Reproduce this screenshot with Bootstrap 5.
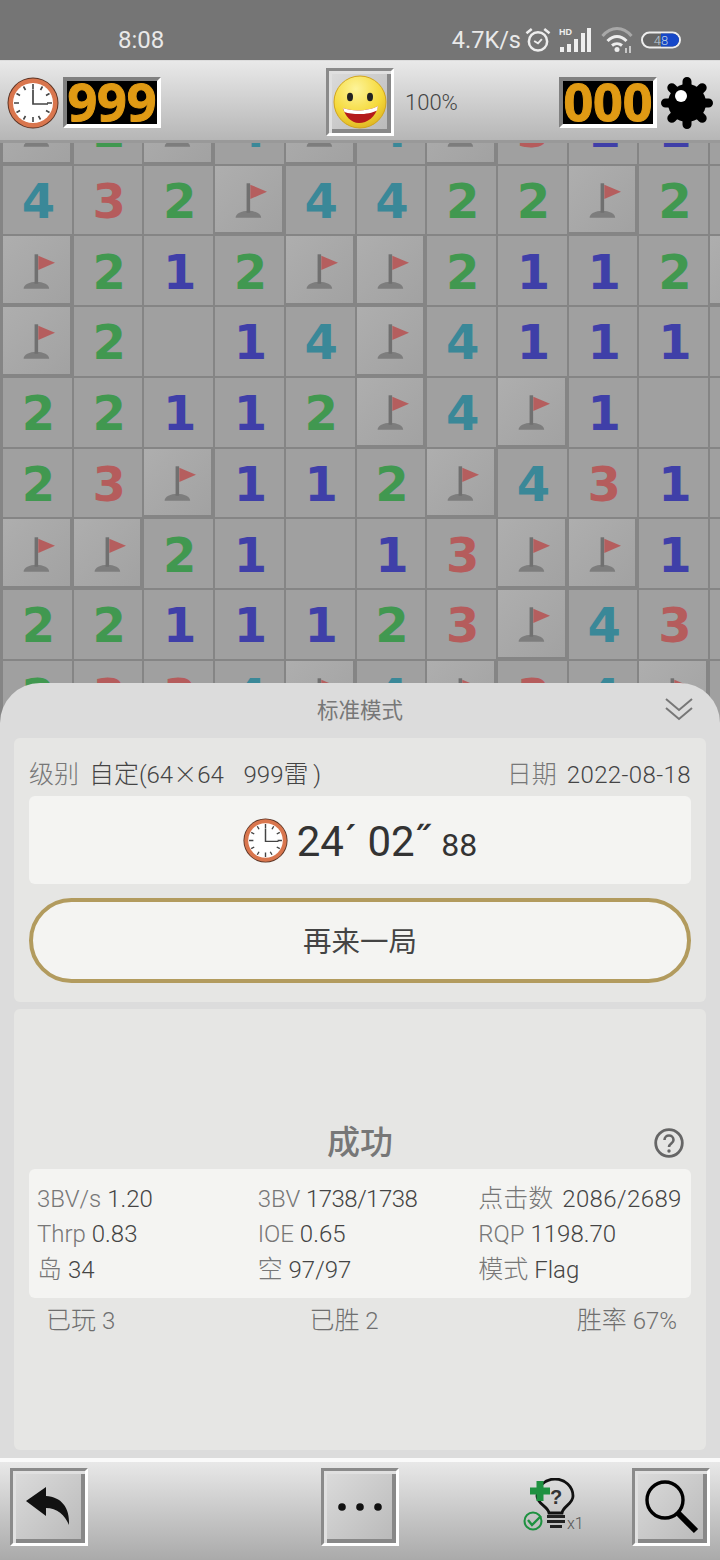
<!DOCTYPE html>
<html lang="zh"><head><meta charset="utf-8"><title>扫雷</title>
<link href="https://cdn.jsdelivr.net/npm/bootstrap@5.3.0/dist/css/bootstrap.min.css" rel="stylesheet">
<style>
html,body{margin:0;padding:0;width:720px;height:1560px;overflow:hidden;background:#dcdcdc}
body{font-family:Roboto,"Noto Sans CJK SC",sans-serif;font-weight:300;color:#444}
.shell{width:720px;height:1560px}
.statusbar{height:60px;background:#757575;color:#e9e9e9;padding:16px 39px 0 118px;line-height:48px}
.statusbar .clock-t{font-size:24px;font-weight:400}
.statusbar .speed{font-size:23.5px;margin-right:4px;font-weight:400}
.topbar{height:83px;background:linear-gradient(#e9e9e9,#b6b6b6);border-bottom:3px solid #999;border-top:1px solid #ddd;padding:4px 7px 0}
.lcd{width:98px;height:51px;background:#000;border-style:solid;border-width:4px;border-color:#808080 #fff #fff #808080;color:#e09a14;font:700 52px/39px "Noto Sans",sans-serif;text-align:center;-webkit-text-stroke:1px #e09a14}
.bevel{background:linear-gradient(135deg,#dcdcdc,#b8b8b8);border-style:solid;border-width:3px;border-color:#8a8a8a #fff #fff #8a8a8a;box-shadow:inset 3px 3px 0 #e0e0e0,inset -4px -4px 0 #888}
.smile-btn{width:68px;height:68px;margin-top:-1px}
.pct{font-size:22px;color:#444;margin-left:11px}
.mid{margin-left:165px}
.board{height:580px;overflow:hidden;background:#858585}
.tiles{display:grid;grid-template-columns:repeat(11,68.72px);grid-auto-rows:68.72px;gap:2px;padding-left:3px;margin-top:-48.1px;font:700 48px/1 "DejaVu Sans",sans-serif}
.tile{background:#a0a0a0;display:flex;align-items:center;justify-content:center;padding:2px 0 0 2px}
.tile-up{background:linear-gradient(135deg,#aeaeae,#a2a2a2);border-right:2px solid #858585;border-bottom:2px solid #858585;padding:0}
.d1{color:#3f3fa8}.d2{color:#419850}.d3{color:#b55c5c}.d4{color:#3a8898}
.sheet{position:relative;margin-top:-40px;height:773px;background:#dcdcdc;border-radius:40px 40px 0 0;padding:0 14px 6px}
.sheet-head{height:55px;color:#777;font-size:21.5px;font-weight:400;padding-top:2px}
.sheet-head svg{position:absolute;right:27px;top:14px}
.panel{background:#e6e6e4;border-radius:6px;padding:0 15px}
.panel-a{height:264px}
.panel-b{height:441px;margin-top:7px}
.info-row{height:58px;font-size:24px;line-height:32px;padding-top:21px;word-spacing:4px}
.info-row .date-val{letter-spacing:.4px}
.lbl{color:#777}
.val{color:#444}
.big-cjk{font-size:25px;line-height:1}
.times{font-family:"Noto Sans CJK SC",sans-serif;font-weight:300;line-height:1}
.box{background:#f4f4f2;border-radius:6px}
.time-box{height:88px;color:#333;font-weight:400;font-size:42px;line-height:60px;gap:9px}
.time-box .t-txt{margin-top:6px}
.time-box small{font-size:32px;margin-left:11px}
.again{height:85px;margin-top:14px;border:4px solid #b29b5e;border-radius:43px;font-size:28.5px;color:#444;font-weight:400;background:#f4f4f2;padding-top:5px}
.result-head{height:160px;padding:116px 7px 0}
.result-title{color:#777;font-size:33px;font-weight:500;line-height:36px}
.result-head svg{margin-top:3px}
.spacer-w{width:30px}
.stats{height:129px;padding:12.500px 0 0;font-size:24px;line-height:35.5px}
.stats .col-4{padding-left:8px;white-space:nowrap;height:35.5px}
.stats .tight{letter-spacing:-.55px}
.stats .wide{letter-spacing:.4px;margin-left:3px}
.tally{font-size:24px;padding:6px 14px 0 17px;line-height:34px}
.tally .lbl{color:#6f6f6f}
.bottombar{height:104px;background:#dcdcdc;padding-top:2px}
.bottom-in{height:102px;border-top:4px solid #fafafa;background:linear-gradient(#e8e8e8,#aaa);padding:6px 10px 0}
.tool{width:78px;height:78px}
.tool-more{margin-left:233px}
.hint{width:62px;height:58px;margin:10px 0 0 123px}
</style></head>
<body>
<svg width="0" height="0" style="position:absolute">
<defs>
<symbol id="flag" viewBox="0 0 68 68"><path d="M21 53a13 7 0 0 1 26 0Z" fill="#7d7d7d"/><rect x="32.200" y="18" width="3.600" height="30" fill="#707070"/><path d="M36 19.500 53 26.500 36 34Z" fill="#b55e5e"/></symbol>
<symbol id="clk" viewBox="0 0 52 52"><circle cx="26" cy="26" r="25.500" fill="#5b3526"/><circle cx="26" cy="26" r="24.500" fill="#d9764e"/><circle cx="26" cy="26" r="20" fill="#fff"/><g stroke="#444" stroke-width="1.600"><path d="M26 7v5M26 40v5M7 26h5M40 26h5M16.500 9.500l2 3.500M33.500 42.500l-2-3.500M9.500 16.500l3.500 2M42.500 35.500l-3.500-2M35.500 9.500l-2 3.500M16.500 42.500l2-3.500M42.500 16.500l-3.500 2M9.500 35.500l3.500-2"/></g><path d="M26 12.500V27H41" fill="none" stroke="#444" stroke-width="1.700"/></symbol>
<radialGradient id="yl" cx=".42" cy=".25" r=".85"><stop offset="0" stop-color="#fdf49a"/><stop offset=".6" stop-color="#f5d93a"/><stop offset="1" stop-color="#d8ab1c"/></radialGradient>
</defs></svg>
<div class="shell d-flex flex-column">
<div class="statusbar d-flex align-items-start justify-content-between">
<span class="clock-t">8:08</span>
<div class="d-flex align-items-center" style="height:48px">
<span class="speed">4.7K/s</span>
<svg width="26" height="26" viewBox="0 0 27 26" fill="none" stroke="#eee" stroke-width="2.600"><circle cx="13.500" cy="14.500" r="9.500"/><path d="M9.500 14l4 2.500 4-4.500" stroke-width="2"/><path d="M1.500 6 7 1.500M25.500 6 20 1.500"/></svg>
<svg class="ms-2" width="32" height="26" viewBox="0 0 32 26"><text x="0" y="8" font-family="Liberation Sans" font-weight="700" font-size="9" fill="#eee">HD</text><g fill="#eee"><rect x="1" y="20" width="4" height="5"/><rect x="8" y="17" width="4" height="8"/><rect x="15" y="12" width="4" height="13"/><rect x="22" y="6" width="4" height="19"/><rect x="28" y="1" width="4" height="24"/></g></svg>
<svg style="margin-left:10px" width="32" height="26" viewBox="0 0 32 26" fill="none" stroke-width="3"><path d="M1.500 9C10-1 22-1 30.500 9" stroke="#a8a8a8"/><path d="M6.500 14c6-6 13-6 19 0" stroke="#eee"/><path d="M11 18.500c3-2.500 7-2.500 10 0" stroke="#eee"/><circle cx="16" cy="22.500" r="2.500" fill="#eee" stroke="none"/><path d="M25 21v5M29 19v7" stroke="#ddd" stroke-width="1.600"/></svg>
<svg class="ms-2" width="40" height="18" viewBox="0 0 40 18"><rect x="1" y="1.500" width="38" height="15" rx="7.500" fill="#666" stroke="#eee" stroke-width="2"/><path d="M20 2.500H31.500a6.500 6.500 0 0 1 0 13H20Z" fill="#1547c8"/><text x="20" y="14" font-family="Roboto" font-size="13" fill="#bcd" text-anchor="middle">48</text></svg>
</div>
</div>
<div class="topbar d-flex align-items-center">
<svg width="52" height="52"><use href="#clk"/></svg>
<div class="lcd ms-1">999</div>
<div class="bevel smile-btn mid d-flex align-items-center justify-content-center">
<svg width="54" height="54" viewBox="0 0 54 54"><circle cx="27" cy="27" r="26" fill="url(#yl)" stroke="#d2a51c"/><ellipse cx="17" cy="22" rx="3" ry="4.200" fill="#222"/><ellipse cx="37" cy="22" rx="3" ry="4.200" fill="#222"/><path d="M10 33C20 37 36 36 45 31 43 42 34 48 26 48 18 48 12 41 10 33Z" fill="#b51b1b"/><path d="M10 33C20 37 36 36 45 31L44 35.500C36 40 20 40 11.500 37Z" fill="#fff"/></svg>
</div>
<span class="pct">100%</span>
<div class="lcd ms-auto">000</div>
<svg class="ms-1" width="52" height="52" viewBox="0 0 52 52"><g stroke="#000" stroke-width="9" stroke-linecap="round"><path d="M26 4.500V47.500M4.500 26H47.500M10.800 10.800 41.200 41.200M41.200 10.800 10.800 41.200"/></g><circle cx="26" cy="26" r="19" fill="#000"/><circle cx="20" cy="19" r="6" fill="#fff"/></svg>
</div>
<div class="board">
<div class="tiles">
<div class="tile tile-up"><svg width="68" height="68"><use href="#flag"/></svg></div><div class="tile d2">2</div><div class="tile tile-up"><svg width="68" height="68"><use href="#flag"/></svg></div><div class="tile d4">4</div><div class="tile tile-up"><svg width="68" height="68"><use href="#flag"/></svg></div><div class="tile d4">4</div><div class="tile tile-up"><svg width="68" height="68"><use href="#flag"/></svg></div><div class="tile d3">3</div><div class="tile d1">1</div><div class="tile d1">1</div><div class="tile"></div>
<div class="tile d4">4</div><div class="tile d3">3</div><div class="tile d2">2</div><div class="tile tile-up"><svg width="68" height="68"><use href="#flag"/></svg></div><div class="tile d4">4</div><div class="tile d4">4</div><div class="tile d2">2</div><div class="tile d2">2</div><div class="tile tile-up"><svg width="68" height="68"><use href="#flag"/></svg></div><div class="tile d2">2</div><div class="tile"></div>
<div class="tile tile-up"><svg width="68" height="68"><use href="#flag"/></svg></div><div class="tile d2">2</div><div class="tile d1">1</div><div class="tile d2">2</div><div class="tile tile-up"><svg width="68" height="68"><use href="#flag"/></svg></div><div class="tile tile-up"><svg width="68" height="68"><use href="#flag"/></svg></div><div class="tile d2">2</div><div class="tile d1">1</div><div class="tile d1">1</div><div class="tile d2">2</div><div class="tile tile-up"></div>
<div class="tile tile-up"><svg width="68" height="68"><use href="#flag"/></svg></div><div class="tile d2">2</div><div class="tile"></div><div class="tile d1">1</div><div class="tile d4">4</div><div class="tile tile-up"><svg width="68" height="68"><use href="#flag"/></svg></div><div class="tile d4">4</div><div class="tile d1">1</div><div class="tile d1">1</div><div class="tile d1">1</div><div class="tile"></div>
<div class="tile d2">2</div><div class="tile d2">2</div><div class="tile d1">1</div><div class="tile d1">1</div><div class="tile d2">2</div><div class="tile tile-up"><svg width="68" height="68"><use href="#flag"/></svg></div><div class="tile d4">4</div><div class="tile tile-up"><svg width="68" height="68"><use href="#flag"/></svg></div><div class="tile d1">1</div><div class="tile"></div><div class="tile"></div>
<div class="tile d2">2</div><div class="tile d3">3</div><div class="tile tile-up"><svg width="68" height="68"><use href="#flag"/></svg></div><div class="tile d1">1</div><div class="tile d1">1</div><div class="tile d2">2</div><div class="tile tile-up"><svg width="68" height="68"><use href="#flag"/></svg></div><div class="tile d4">4</div><div class="tile d3">3</div><div class="tile d1">1</div><div class="tile"></div>
<div class="tile tile-up"><svg width="68" height="68"><use href="#flag"/></svg></div><div class="tile tile-up"><svg width="68" height="68"><use href="#flag"/></svg></div><div class="tile d2">2</div><div class="tile d1">1</div><div class="tile"></div><div class="tile d1">1</div><div class="tile d3">3</div><div class="tile tile-up"><svg width="68" height="68"><use href="#flag"/></svg></div><div class="tile tile-up"><svg width="68" height="68"><use href="#flag"/></svg></div><div class="tile d1">1</div><div class="tile"></div>
<div class="tile d2">2</div><div class="tile d2">2</div><div class="tile d1">1</div><div class="tile d1">1</div><div class="tile d1">1</div><div class="tile d2">2</div><div class="tile d3">3</div><div class="tile tile-up"><svg width="68" height="68"><use href="#flag"/></svg></div><div class="tile d4">4</div><div class="tile d3">3</div><div class="tile"></div>
<div class="tile d2">2</div><div class="tile d3">3</div><div class="tile d3">3</div><div class="tile d4">4</div><div class="tile tile-up"><svg width="68" height="68"><use href="#flag"/></svg></div><div class="tile d4">4</div><div class="tile tile-up"><svg width="68" height="68"><use href="#flag"/></svg></div><div class="tile d3">3</div><div class="tile d4">4</div><div class="tile tile-up"><svg width="68" height="68"><use href="#flag"/></svg></div><div class="tile"></div>
</div>
</div>
<div class="sheet">
<div class="sheet-head d-flex align-items-center justify-content-center">标准模式
<svg width="28" height="24" viewBox="0 0 28 24" fill="none" stroke="#777" stroke-width="2"><path d="M1 2 14 13 27 2M1 11 14 22 27 11"/></svg></div>
<div class="panel panel-a">
<div class="info-row d-flex justify-content-between"><span><span class="lbl big-cjk">级别</span> <span class="val"><span class="big-cjk">自定</span>(64<span class="times">×</span>64&nbsp; 999<span class="big-cjk">雷</span>&thinsp;)</span></span><span><span class="lbl big-cjk">日期</span> <span class="val date-val">2022-08-18</span></span></div>
<div class="box time-box d-flex align-items-center justify-content-center"><svg width="45" height="45"><use href="#clk"/></svg><span class="t-txt">24´ 02˝<small>88</small></span></div>
<div class="again d-flex align-items-center justify-content-center">再来一局</div>
</div>
<div class="panel panel-b">
<div class="result-head d-flex align-items-start justify-content-between"><span class="spacer-w"></span><span class="result-title">成功</span>
<svg width="30" height="30" viewBox="0 0 30 30" fill="none" stroke="#666" stroke-width="2.800"><circle cx="15" cy="15" r="13.300"/><path d="M10.500 12c0-6 9-6 9 0 0 3.500-4.500 3.500-4.500 7" stroke-width="2.600"/><circle cx="15" cy="23" r="1.700" fill="#666" stroke="none"/></svg></div>
<div class="box stats"><div class="row g-0">
<div class="col-4"><span class="lbl">3BV/s</span> <span class="val">1.20</span></div><div class="col-4"><span class="lbl">3BV</span> <span class="val tight">1738/1738</span></div><div class="col-4"><span class="lbl big-cjk">点击数</span> <span class="val wide">2086/2689</span></div>
<div class="col-4"><span class="lbl">Thrp</span> <span class="val">0.83</span></div><div class="col-4"><span class="lbl">IOE</span> <span class="val">0.65</span></div><div class="col-4"><span class="lbl">RQP</span> <span class="val">1198.70</span></div>
<div class="col-4"><span class="lbl big-cjk">岛</span> <span class="val">34</span></div><div class="col-4"><span class="lbl big-cjk">空</span> <span class="val">97/97</span></div><div class="col-4"><span class="lbl big-cjk">模式</span> <span class="val">Flag</span></div>
</div></div>
<div class="tally d-flex justify-content-between"><span><span class="lbl big-cjk">已玩</span> <span class="lbl">3</span></span><span class="me-1"><span class="lbl big-cjk">已胜</span> <span class="lbl">2</span></span><span><span class="lbl big-cjk">胜率</span> <span class="lbl">67%</span></span></div>
</div>
</div>
<div class="bottombar"><div class="bottom-in d-flex align-items-start">
<div class="bevel tool d-flex align-items-center justify-content-center"><svg width="48" height="40" viewBox="0 0 48 40"><path d="M1 14 21 0V9C36 10 45 20 44 38 40 28 32 21 21 21V29Z" fill="#111"/></svg></div>
<div class="bevel tool tool-more d-flex align-items-center justify-content-center"><svg width="44" height="8" viewBox="0 0 44 8" fill="#111"><circle cx="4" cy="4" r="3.800"/><circle cx="22" cy="4" r="3.800"/><circle cx="40" cy="4" r="3.800"/></svg></div>
<svg class="hint" viewBox="0 0 62 58"><path d="M27 35C26 28 15 26 15 18a18 17 0 0 1 36 0C51 26 41 28 40 35Z" fill="none" stroke="#111" stroke-width="2.800"/><rect x="25" y="37" width="18" height="3" fill="#222"/><rect x="25" y="42" width="18" height="3" fill="#222"/><rect x="28" y="47" width="12" height="3" fill="#222"/><text x="34" y="26" font-family="Liberation Sans" font-weight="700" font-size="20" fill="#333" text-anchor="middle">?</text><path d="M14.500 3h7v6.500H28v7h-6.500V23h-7v-6.500H8v-7h6.500z" fill="#1e9140"/><circle cx="11" cy="43" r="8.500" fill="none" stroke="#1e9140" stroke-width="2"/><path d="M6 42l4 5 9-9" fill="none" stroke="#1e9140" stroke-width="2.400"/><text x="45" y="51" font-family="Roboto" font-size="16" fill="#555">x1</text></svg>
<div class="bevel tool ms-auto d-flex align-items-center justify-content-center"><svg width="56" height="56" viewBox="0 0 56 56" fill="none" stroke="#000"><circle cx="22" cy="21" r="18" stroke-width="3.400"/><path d="M35 34 53 52" stroke-width="6"/></svg></div>
</div></div>
</div>
</body></html>
